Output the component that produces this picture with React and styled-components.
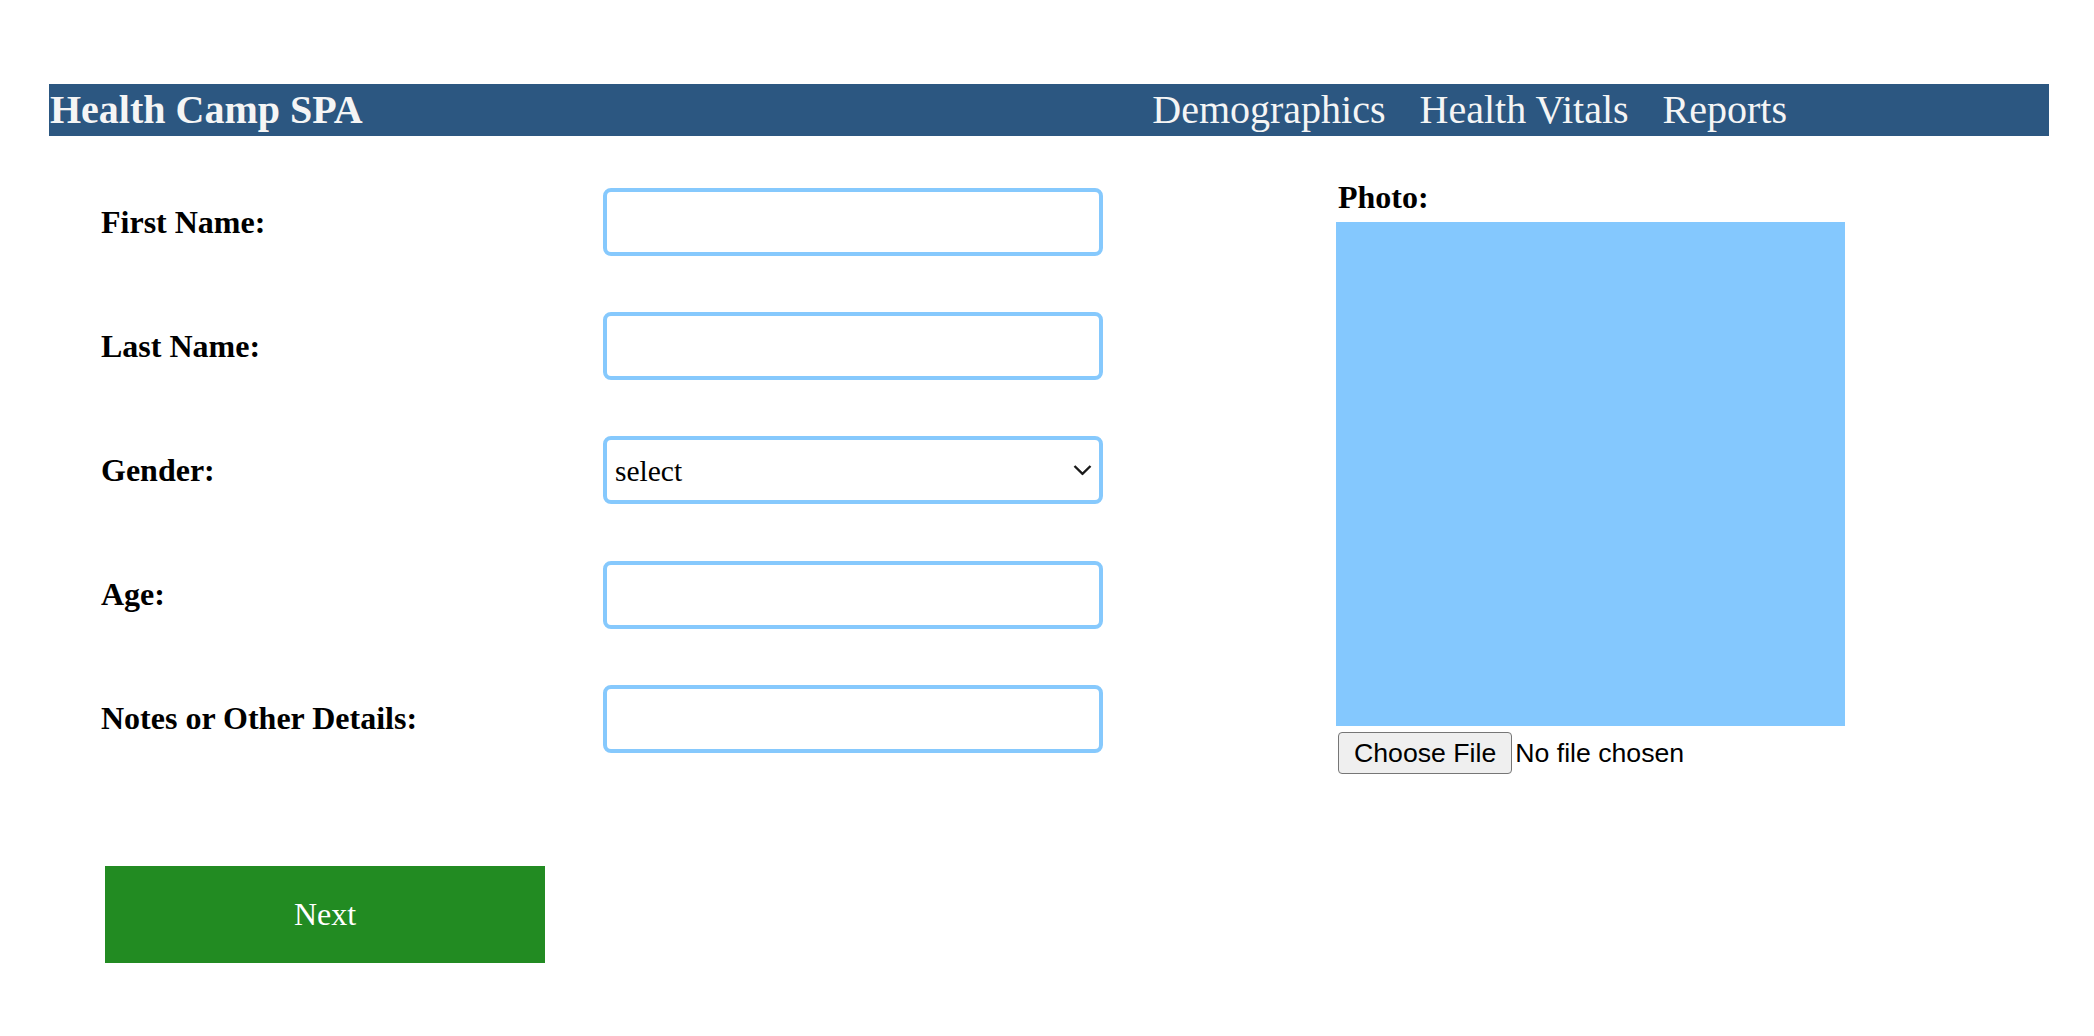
import React from "react";
import styled, { createGlobalStyle } from "styled-components";

const GlobalStyle = createGlobalStyle`
  html, body { margin: 0; padding: 0; background: #ffffff; }
  body { font-family: "Liberation Serif", "Times New Roman", serif; color: #000; }
  * { box-sizing: border-box; }
`;

const Page = styled.div`
  padding: 84px 45px 60px 49px;
`;

const Header = styled.header`
  display: flex;
  align-items: center;
  height: 52px;
  background: #2c5781;
  color: #f5f5f5;
`;

const Title = styled.h1`
  margin: 0;
  padding-left: 1px;
  font-size: 40px;
  font-weight: 700;
  line-height: 1;
  white-space: nowrap;
`;

const Nav = styled.nav`
  display: flex;
  gap: 34px;
  margin-left: auto;
  margin-right: 262px;
`;

const NavLink = styled.a`
  font-size: 40px;
  line-height: 1;
  color: #f5f5f5;
  text-decoration: none;
  white-space: nowrap;
  cursor: pointer;
`;

const Main = styled.main`
  display: flex;
  align-items: flex-start;
`;

const FormColumn = styled.section`
  display: flex;
  flex-direction: column;
  margin-left: 52px;
  padding-top: 52px;
`;

const Fields = styled.div`
  display: grid;
  grid-template-columns: 502px 500px;
  grid-auto-rows: 68px;
  row-gap: 56.2px;
  align-items: center;
`;

const Label = styled.label`
  font-size: 32px;
  font-weight: 700;
  white-space: nowrap;
`;

const fieldBox = `
  width: 500px;
  height: 68px;
  border: 4px solid #86c9fd;
  border-radius: 8px;
  background: #ffffff;
  outline: none;
`;

const TextInput = styled.input`
  ${fieldBox}
  padding: 0 10px;
  font-family: "Liberation Serif", serif;
  font-size: 28px;
`;

const SelectWrap = styled.div`
  position: relative;
  width: 500px;
  height: 68px;
`;

const Select = styled.select`
  ${fieldBox}
  appearance: none;
  -webkit-appearance: none;
  padding: 2px 40px 0 8px;
  font-family: "Liberation Serif", serif;
  font-size: 29.5px;
  color: #000;
`;

const Chevron = styled.svg`
  position: absolute;
  right: 11px;
  top: 50%;
  width: 19px;
  height: 11px;
  transform: translateY(-50%);
  pointer-events: none;
`;

const NextButton = styled.button`
  margin-top: 113px;
  margin-left: 4px;
  width: 440px;
  height: 97px;
  border: none;
  background: #228b22;
  color: #ffffff;
  font-family: "Liberation Serif", serif;
  font-size: 32px;
  cursor: pointer;
`;

const PhotoColumn = styled.section`
  display: flex;
  flex-direction: column;
  margin-left: 233px;
  padding-top: 43px;
`;

const PhotoLabel = styled.label`
  padding-left: 2px;
  font-size: 32px;
  font-weight: 700;
  line-height: 36px;
`;

const PhotoBox = styled.div`
  margin-top: 7px;
  width: 509px;
  height: 504px;
  background: #84c8fe;
`;

const FileRow = styled.div`
  display: flex;
  align-items: center;
  margin-top: 6px;
  margin-left: 2px;
  font-family: "Liberation Sans", Arial, sans-serif;
  font-size: 26.67px;
`;

const FileButton = styled.button`
  height: 42px;
  padding: 0 15px;
  border: 1.5px solid #767676;
  border-radius: 4px;
  background: #efefef;
  color: #000;
  font-family: "Liberation Sans", Arial, sans-serif;
  font-size: 26.67px;
  cursor: pointer;
`;

const FileName = styled.span`
  margin-left: 3px;
  color: #000;
`;

const fields = [
  { id: "first", label: "First Name:" },
  { id: "last", label: "Last Name:" },
  { id: "gender", label: "Gender:", select: true },
  { id: "age", label: "Age:" },
  { id: "notes", label: "Notes or Other Details:" },
];

export default function App() {
  return (
    <>
      <GlobalStyle />
      <Page>
        <Header>
          <Title>Health Camp SPA</Title>
          <Nav>
            <NavLink>Demographics</NavLink>
            <NavLink>Health Vitals</NavLink>
            <NavLink>Reports</NavLink>
          </Nav>
        </Header>
        <Main>
          <FormColumn>
            <Fields>
              {fields.map((f) => (
                <React.Fragment key={f.id}>
                  <Label htmlFor={f.id}>{f.label}</Label>
                  {f.select ? (
                    <SelectWrap>
                      <Select id={f.id} defaultValue="">
                        <option value="">select</option>
                        <option value="male">Male</option>
                        <option value="female">Female</option>
                        <option value="other">Other</option>
                      </Select>
                      <Chevron viewBox="0 0 19 11" fill="none">
                        <path d="M1.5 1.5 L9.5 9.3 L17.5 1.5" stroke="#1a1a1a" strokeWidth="2.4" />
                      </Chevron>
                    </SelectWrap>
                  ) : (
                    <TextInput id={f.id} type="text" />
                  )}
                </React.Fragment>
              ))}
            </Fields>
            <NextButton type="button">Next</NextButton>
          </FormColumn>
          <PhotoColumn>
            <PhotoLabel>Photo:</PhotoLabel>
            <PhotoBox />
            <FileRow>
              <FileButton type="button">Choose File</FileButton>
              <FileName>No file chosen</FileName>
            </FileRow>
          </PhotoColumn>
        </Main>
      </Page>
    </>
  );
}
